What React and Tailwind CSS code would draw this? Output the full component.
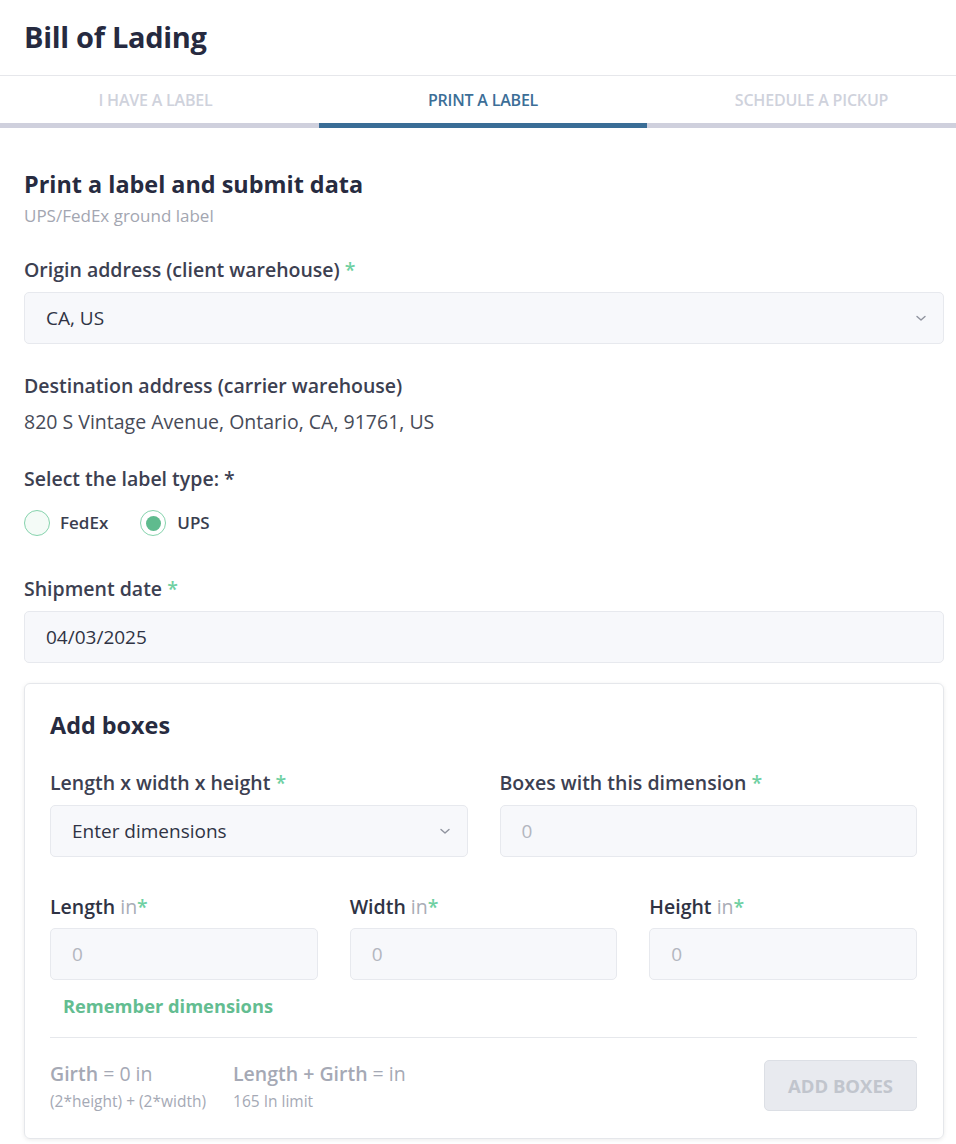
import React from "react";

const Star = () => <span className="text-[#6fd0a2]"> *</span>;

function Label({ children, className = "" }) {
  return (
    <div className={"text-[19.5px] leading-[26px] font-semibold text-[#3c4051] " + className}>{children}</div>
  );
}

function Chevron() {
  return (
    <svg width="14" height="14" viewBox="0 0 14 14" fill="none">
      <path d="M3 5.5l4 3.5 4-3.5" stroke="#8f939e" strokeWidth="1.4" strokeLinecap="round" strokeLinejoin="round" />
    </svg>
  );
}

function Field({ children, select, placeholder }) {
  return (
    <div className="h-[52px] rounded-[5px] border border-[#e7e9ee] bg-[#f7f8fb] pl-[21px] pr-[15px] flex items-center justify-between">
      <span className={"text-[19px] " + (placeholder ? "text-[#b3b6bf] font-normal" : "text-[#2f3344] font-medium")}>{children}</span>
      {select && <Chevron />}
    </div>
  );
}

export default function App() {
  return (
    <div className="w-[956px] bg-white" style={{ fontFamily: '"Open Sans", "Noto Sans", sans-serif' }}>
      <div className="h-[76px] border-b border-[#e6e7eb] px-[24px] flex items-center pb-[2px]">
        <h1 className="text-[29px] font-bold text-[#262a40] tracking-[-0.3px]">Bill of Lading</h1>
      </div>
      <div className="grid grid-cols-[319px_328px_1fr]">
        {[
          ["I HAVE A LABEL", false, "pr-[8px]"],
          ["PRINT A LABEL", true, ""],
          ["SCHEDULE A PICKUP", false, "pl-[20px]"],
        ].map(([t, a, p]) => (
          <div key={t} className={"h-[52px] flex items-center justify-center border-b-[5px] pt-[1px] " + p + " " + (a ? "border-[#3a6d96]" : "border-[#cfd0dd]")}>
            <span className={"text-[16px] font-semibold tracking-[-0.2px] " + (a ? "text-[#3c6e97]" : "text-[#cfd2dc]")}>{t}</span>
          </div>
        ))}
      </div>

      <div className="pl-[24px] pr-[12px] pt-[42px] pb-[5px]">
        <h2 className="text-[23.4px] leading-[28px] font-bold text-[#272b40]">Print a label and submit data</h2>
        <div className="mt-[7px] text-[17px] leading-[22px] text-[#a3a6b1]">UPS/FedEx ground label</div>

        <Label className="mt-[30px]">Origin address (client warehouse)<Star /></Label>
        <div className="mt-[9px]">
          <Field select>CA, US</Field>
        </div>

        <Label className="mt-[29px]">Destination address (carrier warehouse)</Label>
        <div className="mt-[10px] text-[19.5px] leading-[26px] text-[#474b58]">820 S Vintage Avenue, Ontario, CA, 91761, US</div>

        <Label className="mt-[31px]">Select the label type: *</Label>
        <div className="mt-[18px] flex items-center">
          <div className="flex items-center">
            <span className="w-[26px] h-[26px] rounded-full border-[1.5px] border-[#86d3ad] bg-[#f4fbf7]" />
            <span className="ml-[10px] text-[17px] font-semibold text-[#3a3e4f]">FedEx</span>
          </div>
          <div className="flex items-center ml-[32px]">
            <span className="w-[26px] h-[26px] rounded-full border-[1.5px] border-[#86d3ad] bg-white flex items-center justify-center">
              <span className="w-[15px] h-[15px] rounded-full bg-[#5fbb8e]" />
            </span>
            <span className="ml-[11px] text-[17px] font-semibold text-[#3a3e4f]">UPS</span>
          </div>
        </div>

        <Label className="mt-[40px]">Shipment date<Star /></Label>
        <div className="mt-[9px]">
          <Field>04/03/2025</Field>
        </div>

        <div className="mt-[20px] rounded-[6px] border border-[#e5e7eb] shadow-[0_1px_4px_rgba(0,0,0,0.08)] pl-[25px] pr-[26px] pt-[26px] pb-[27px]">
          <h3 className="text-[23.4px] leading-[30px] font-bold text-[#272b40]">Add boxes</h3>
          <div className="mt-[30px] grid grid-cols-2 gap-x-[32px]">
            <div>
              <Label>Length x width x height<Star /></Label>
              <div className="mt-[9px]">
                <Field select>Enter dimensions</Field>
              </div>
            </div>
            <div>
              <Label>Boxes with this dimension<Star /></Label>
              <div className="mt-[9px]">
                <Field placeholder>0</Field>
              </div>
            </div>
          </div>

          <div className="mt-[37px] grid grid-cols-3 gap-x-[32px]">
            {["Length", "Width", "Height"].map((n) => (
              <div key={n}>
                <div className="text-[19.5px] leading-[26px] font-semibold text-[#2f3344]">
                  {n} <span className="font-normal text-[#a9acb6]">in</span><span className="text-[#6fd0a2]">*</span>
                </div>
                <div className="mt-[8px]">
                  <Field placeholder>0</Field>
                </div>
              </div>
            ))}
          </div>

          <div className="mt-[13px] pl-[13px] text-[18.3px] leading-[26px] font-bold text-[#63bd91]">Remember dimensions</div>

          <div className="mt-[18px] border-t border-[#e6e8ec]" />

          <div className="mt-[22px] flex items-start justify-between">
            <div className="flex gap-[27px] pt-[1px]">
              <div>
                <div className="text-[19.5px] leading-[26px] text-[#a5a9b5]"><span className="font-semibold">Girth</span> = 0 in</div>
                <div className="mt-[4px] text-[15.5px] leading-[20px] text-[#a5a9b5]">(2*height) + (2*width)</div>
              </div>
              <div>
                <div className="text-[19.5px] leading-[26px] text-[#a5a9b5]"><span className="font-semibold">Length + Girth</span> = in</div>
                <div className="mt-[4px] text-[15.5px] leading-[20px] text-[#a5a9b5]">165 In limit</div>
              </div>
            </div>
            <button className="w-[153px] h-[51px] rounded-[5px] border border-[#dcdfe5] bg-[#e8eaef] text-[18.5px] font-bold text-[#c1c5cd]">ADD BOXES</button>
          </div>
        </div>
      </div>
    </div>
  );
}
